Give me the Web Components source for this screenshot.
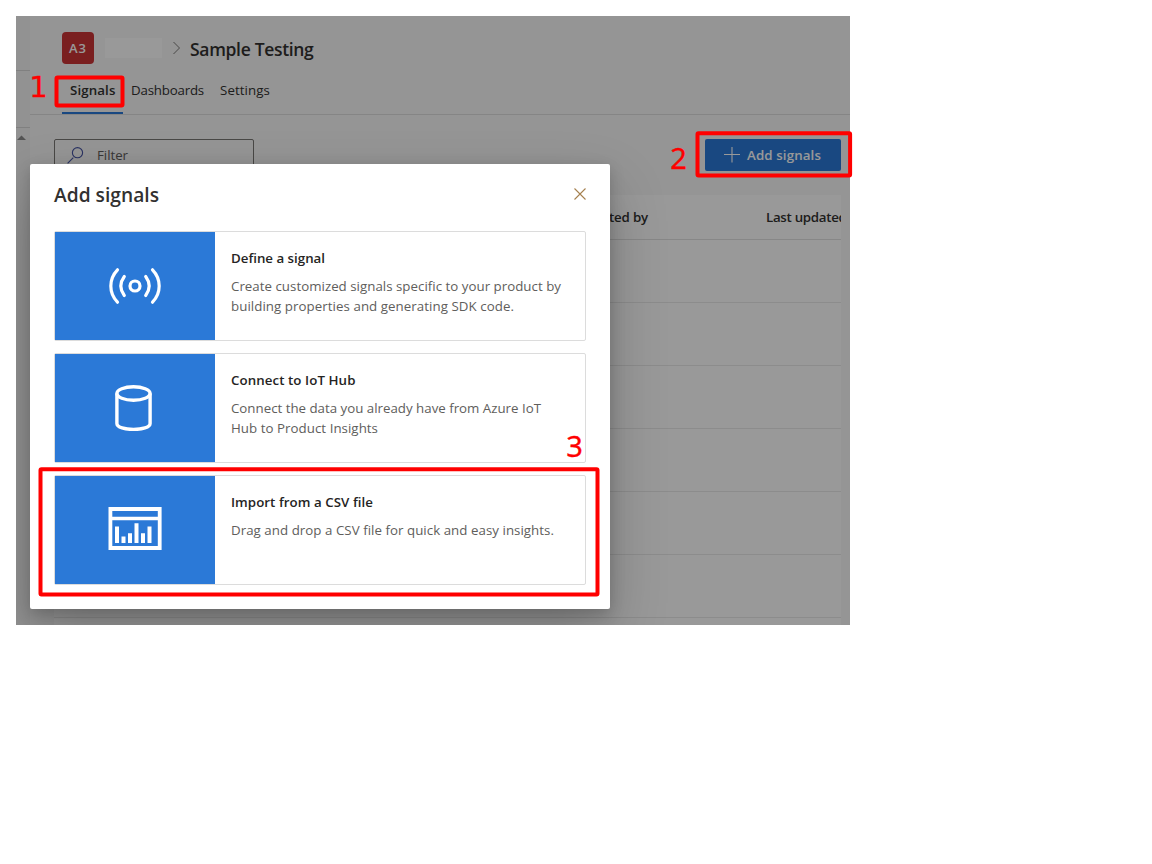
<!DOCTYPE html>
<html lang="en">
<head>
<meta charset="utf-8">
<title>Product Insights</title>
<style>
body{margin:0;padding:16px;background:#fff;font-family:"Open Sans","Noto Sans",sans-serif;color:#323130}
</style>
</head>
<body>
<insights-app></insights-app>
<script>
// Single-line label whose letter spacing is adjusted to fill a given width.
class FitLabel extends HTMLElement{
  connectedCallback(){
    if(this.shadowRoot)return;
    this.attachShadow({mode:'open'}).innerHTML='<style>:host{display:block;white-space:nowrap}span{display:inline-block}</style><span><slot></slot></span>';
    const s=this.shadowRoot.querySelector('span'),w=+this.getAttribute('w');
    const fit=()=>{s.style.letterSpacing='0px';s.style.letterSpacing=((w-s.getBoundingClientRect().width)/this.textContent.length)+'px';};
    requestAnimationFrame(fit);
  }
}
customElements.define('fit-label',FitLabel);

const define=(name,html)=>customElements.define(name,class extends HTMLElement{
  connectedCallback(){if(!this.shadowRoot)this.attachShadow({mode:'open'}).innerHTML=html;}
});

define('side-rail',`<style>
:host{display:grid;grid-template-rows:55px 57px 1fr;width:14px;background:#f3f3f3;box-sizing:border-box}
div{border-bottom:1px solid #d6d6d6}
div:last-child{border:0}
svg{display:block;margin:7px 0 0 1px}
</style><div></div><div></div><div><svg width="9" height="5" viewBox="0 0 9 5"><path d="M0 5 4.5 .5 9 5z" fill="#8a8a8a"/></svg></div>`);

define('page-header',`<style>
:host{display:block;box-sizing:border-box;height:99px;border-bottom:1px solid #dedede;padding:16px 0 0 32px}
.crumbs{display:flex;align-items:center;height:32px}
.logo{width:32px;height:32px;border-radius:4px;background:#cb3436;color:#fff;display:flex;align-items:center;justify-content:center;font-size:13px;font-weight:650}
.blank{width:57px;height:20px;margin-left:11px;background:#fff}
svg{margin:0 9px 0 10px}
.title{font-size:17.5px;font-weight:550;line-height:32px;margin-top:1px}
nav{display:flex;gap:0;margin-top:10px;font-size:13.3px;line-height:32px}
nav>div{box-sizing:border-box;height:40px;padding:0 8px}
nav>div.on{font-weight:550;border-bottom:2px solid #2b79d7;width:61px}
</style>
<div class="crumbs"><div class="logo"><fit-label w="18">A3</fit-label></div><div class="blank"></div>
<svg width="9" height="14" viewBox="0 0 9 14"><path d="M1.5 1 7.5 7l-6 6" fill="none" stroke="#7c7a78" stroke-width="1"/></svg>
<div class="title"><fit-label w="123.5">Sample Testing</fit-label></div></div>
<nav><div class="on"><fit-label w="45.5">Signals</fit-label></div><div><fit-label w="73">Dashboards</fit-label></div><div><fit-label w="50">Settings</fit-label></div></nav>`);

define('command-bar',`<style>
:host{display:flex;justify-content:space-between;padding:24px 9px 0 24px}
.filter{box-sizing:border-box;width:200px;height:32px;border:1px solid #7a7876;border-radius:2px;display:flex;align-items:center;padding-left:12px;font-size:13.3px;color:#605e5c;line-height:30px}
.filter svg{margin-right:13px}
.add{width:136px;height:32px;border-radius:2px;background:#2b79d7;color:#fff;display:flex;align-items:center;font-size:13.3px;font-weight:600;line-height:32px}
.add svg{margin:0 7px 0 19px}
</style>
<div class="filter"><svg width="17" height="17" viewBox="0 0 17 17"><path d="M.6 16.4 6.3 10.6" stroke="#4654a4" stroke-width="1.1"/><circle cx="10.5" cy="5.7" r="5.1" fill="none" stroke="#4654a4" stroke-width="1.1"/></svg><fit-label w="31">Filter</fit-label></div>
<div class="add"><svg width="16" height="16" viewBox="0 0 16 16"><path d="M0 7.5h16M8 0v15.5" stroke="#fff" stroke-width="1.1"/></svg><fit-label w="74">Add signals</fit-label></div>`);

define('signal-table',`<style>
:host{display:block;margin:24px 9px 0 24px;background:#fff;overflow:hidden}
.head,.row{box-sizing:border-box;border-bottom:1px solid #e9e9e9}
.head{display:grid;grid-template-columns:526px 186px 90px;height:45px;border-color:#e2e2e2;font-size:13.3px;font-weight:550;line-height:44px}
.row{height:63px}
</style>
<div class="head"><span></span><fit-label w="68">Created by</fit-label><fit-label w="80.5">Last updated</fit-label></div>
${'<div class="row"></div>'.repeat(7)}`);

define('option-card',`<style>
:host{display:flex;box-sizing:border-box;height:110px;border:1px solid #dcdcdc;border-radius:2px;background:#fff}
.pic{width:160px;background:#2b79d7;display:flex;align-items:center;justify-content:center}
.text{padding:16px 0 0 16px;font-size:13.3px;line-height:20px;color:#605e5c}
.title{font-weight:550;color:#252423;margin-bottom:8px}
</style><div class="pic"><slot name="icon"></slot></div><div class="text"><div class="title"><slot name="title"></slot></div><slot></slot></div>`);

define('signal-dialog',`<style>
:host{display:block;box-sizing:border-box;width:580px;height:445px;background:#fff;border-radius:2px;padding:16px 24px;box-shadow:0 25.6px 57.6px rgba(0,0,0,.22),0 4.8px 14.4px rgba(0,0,0,.18)}
header{display:flex;justify-content:space-between;height:51px;font-size:19.2px;font-weight:550;line-height:30px;color:#323130}
header svg{margin:7.5px 0 0}
main{display:grid;gap:12px}
svg{display:block}
</style>
<header><fit-label w="105">Add signals</fit-label><svg width="12" height="12" viewBox="0 0 12 12"><path d="M.5.5l11 11M11.5.5l-11 11" stroke="#a5804f" stroke-width="1.1"/></svg></header>
<main>
<option-card>
 <svg slot="icon" width="54" height="38" viewBox="0 0 54 38" fill="none" stroke="#fff" stroke-width="3.2" stroke-linecap="round"><circle cx="27" cy="19" r="5"/><path d="M16.3 9.5Q9.3 19 16.3 28.5M37.7 9.5Q44.7 19 37.7 28.5M9.5 2.8C.6 12 .6 26 9.5 35.2M44.5 2.8C53.4 12 53.4 26 44.5 35.2"/></svg>
 <fit-label slot="title" w="94">Define a signal</fit-label>
 <fit-label w="330">Create customized signals specific to your product by</fit-label><fit-label w="283">building properties and generating SDK code.</fit-label>
</option-card>
<option-card>
 <svg slot="icon" width="40" height="46" viewBox="0 0 40 46" fill="none" stroke="#fff" stroke-width="3.4"><ellipse cx="18.5" cy="8.5" rx="16.6" ry="6.7"/><path d="M1.9 8.5v30C1.9 46.4 35.1 46.4 35.1 38.5v-30"/></svg>
 <fit-label slot="title" w="124.5">Connect to IoT Hub</fit-label>
 <fit-label w="310">Connect the data you already have from Azure IoT</fit-label><fit-label w="147">Hub to Product Insights</fit-label>
</option-card>
<option-card>
 <svg slot="icon" width="54" height="43" viewBox="0 0 54 43" style="margin-bottom:3px"><path d="M2.4 2h49.3v39H2.4z" fill="none" stroke="#fff" stroke-width="3.8"/><path d="M2.2 11.5h49.5" stroke="#fff" stroke-width="3.4"/><path d="M7 19.5h4V36H7zM13.5 29.5h4V36h-4zM20 26.2h4V36h-4zM26.5 16.3h4V36h-4zM33 26.2h4V36h-4zM39.5 19.5h4V36h-4z" fill="#fff"/></svg>
 <fit-label slot="title" w="142">Import from a CSV file</fit-label>
 <fit-label w="323">Drag and drop a CSV file for quick and easy insights.</fit-label>
</option-card>
</main>`);

// Numbered callout drawn over the page; the box and number sit on a free canvas.
customElements.define('step-mark',class extends HTMLElement{
  connectedCallback(){
    if(this.shadowRoot)return;
    const [x,y,w,h,nx,ny]=this.getAttribute('at').split(' ').map(Number);
    this.attachShadow({mode:'open'}).innerHTML=`<style>
:host{display:contents}
svg{position:absolute;left:0;top:0;overflow:visible;pointer-events:none}
b{position:absolute;left:${nx}px;top:${ny}px;color:#f00;-webkit-text-stroke:.35px #f00;font:29px/30px ${this.getAttribute('face')||'"Noto Sans"'},sans-serif}
</style><svg width="1" height="1"><rect x="${x+2.2}" y="${y+2.2}" width="${w-4.4}" height="${h-4.4}" rx="1" fill="none" stroke="#f00" stroke-width="4"/></svg><b><slot></slot></b>`;
  }
});

define('insights-app',`<style>
:host{display:block}
.screen{position:relative;width:834px;height:609px;overflow:hidden;display:grid;grid-template-columns:14px 820px;background:#f8f8f8}
.page{min-width:0}
.shade{position:absolute;inset:0;background:rgba(0,0,0,.4)}
signal-dialog{position:absolute;left:14px;top:148px}
</style>
<div class="screen"><side-rail></side-rail><div class="page"><page-header></page-header><command-bar></command-bar><signal-table></signal-table></div>
<div class="shade"></div><signal-dialog></signal-dialog></div>
<step-mark at="54.3 75.3 70.4 32.4 29.3 72" face="'DejaVu Sans'">1</step-mark>
<step-mark at="695.3 131 157 46.7 670.3 142.5">2</step-mark>
<step-mark at="38.3 467 561.4 129.7 566.3 430.5">3</step-mark>`);
</script>
</body>
</html>
